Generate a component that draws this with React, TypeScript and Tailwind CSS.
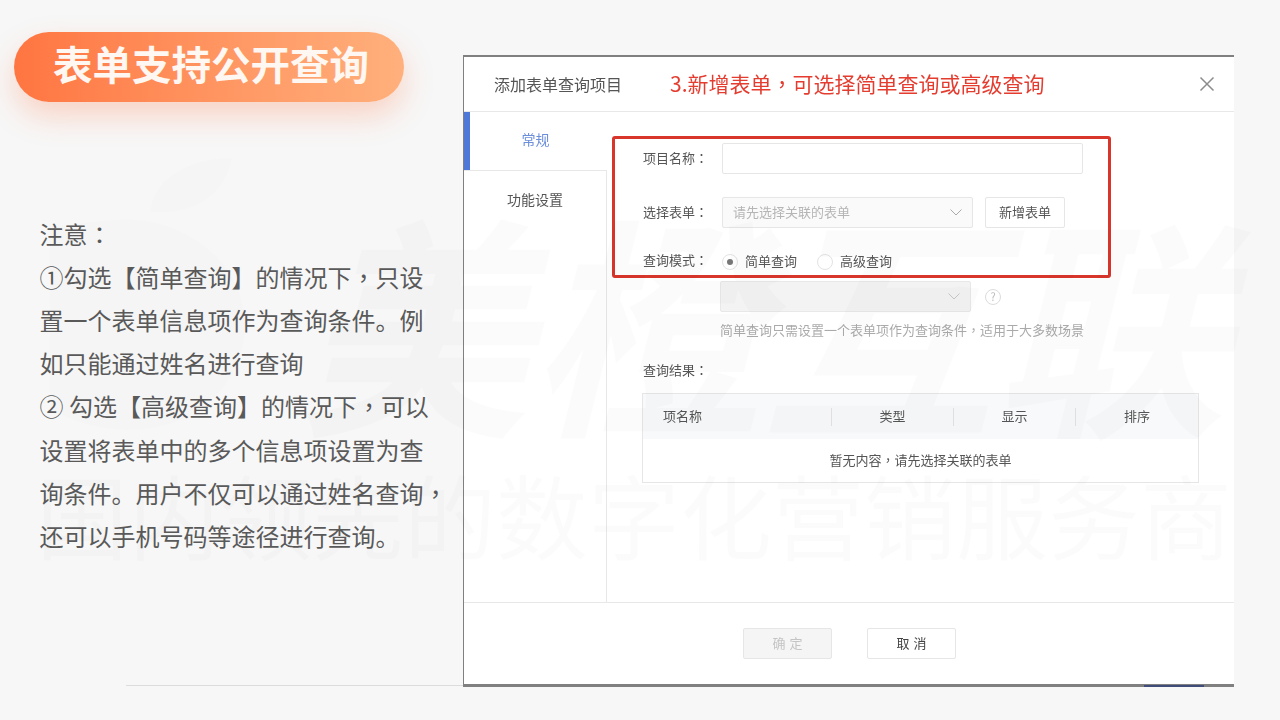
import React from "react";

const C = ({ children }: { children: React.ReactNode }) => (
  <span className="font-['Noto_Sans_CJK_TC','Noto_Sans_CJK_SC',sans-serif]">{children}</span>
);

const Label = ({ children }: { children: React.ReactNode }) => (
  <div className="w-[79px] pb-[2px] text-[13px] text-[#555] whitespace-nowrap">
    {children}
    <C>：</C>
  </div>
);

const Chevron = ({ color }: { color: string }) => (
  <svg width="12" height="7" viewBox="0 0 12 7" fill="none" stroke={color} strokeWidth="1">
    <path d="M0.5 0.5l5.5 5.5 5.5-5.5" />
  </svg>
);

const Radio = ({ on, label }: { on?: boolean; label: string }) => (
  <div className="flex items-center gap-[7px]">
    <div className="w-4 h-4 rounded-full border border-[#e3e3e3] bg-white flex items-center justify-center">
      {on && <div className="w-[6px] h-[6px] rounded-full bg-[#777]" />}
    </div>
    <span className="pb-[1px] text-[13px] text-[#555]">{label}</span>
  </div>
);

export default function App() {
  return (
    <div className="relative w-[1280px] h-[720px] overflow-hidden bg-[#f7f7f7] flex font-['Noto_Sans_CJK_SC',sans-serif]">
      <div className="w-[463px] h-full flex flex-col shrink-0">
        <div className="mt-8 ml-[14px] w-[390px] h-[70px] rounded-[35px] bg-gradient-to-r from-[#ff7541] to-[#ffb07c] shadow-[0_14px_30px_rgba(255,120,70,0.28)] flex items-center justify-center pb-[8px] pl-[4px]">
          <span className="text-[39.5px] leading-none font-bold text-[#fff8f2] whitespace-nowrap">表单支持公开查询</span>
        </div>
        <div className="mt-[109.5px] ml-[39.5px] text-2xl leading-[43.2px] text-[#5a5a5a] whitespace-nowrap">
          <div>注意<C>：</C></div>
          <div>①勾选【简单查询】的情况下<C>，</C>只设</div>
          <div>置一个表单信息项作为查询条件。例</div>
          <div>如只能通过姓名进行查询</div>
          <div>② 勾选【高级查询】的情况下<C>，</C>可以</div>
          <div>设置将表单中的多个信息项设置为查</div>
          <div>询条件。用户不仅可以通过姓名查询<C>，</C></div>
          <div>还可以手机号码等途径进行查询。</div>
        </div>
        <div className="mt-auto mb-[34px] ml-[126px] h-px bg-[#dcdcdc]" />
      </div>

      <div className="mt-[55px] w-[771px] h-[632px] shrink-0 bg-white border-t-[2px] border-b-[3px] border-l border-[#808080] flex flex-col blur-[0.3px]">
        <div className="h-[55px] shrink-0 border-b border-[#e8e8e8] flex items-center pl-[30px] pr-[19px]">
          <span className="text-base text-[#555] whitespace-nowrap">添加表单查询项目</span>
          <span className="ml-[48px] text-[21px] text-[#e43d30] whitespace-nowrap">3.新增表单<C>，</C>可选择简单查询或高级查询</span>
          <svg className="ml-auto" width="16" height="16" viewBox="0 0 16 16" fill="none" stroke="#8c8c8c" strokeWidth="1.5">
            <path d="M1.5 1.5l13 13M14.5 1.5l-13 13" />
          </svg>
        </div>

        <div className="flex-1 flex min-h-0">
          <div className="w-[143px] shrink-0 flex flex-col">
            <div className="h-[58px] border-l-[6px] border-[#4f79d9] flex items-center justify-center pr-[6px] pb-[4px] text-sm text-[#6c8edb]">常规</div>
            <div className="flex-1 border-t border-r border-[#e8e8e8] pt-[18px] text-center text-sm leading-5 text-[#555]">功能设置</div>
          </div>

          <div className="flex-1 pl-[36px] flex flex-col">
            <div className="mt-[31px] flex items-center h-[31px]">
              <Label>项目名称</Label>
              <div className="w-[361px] h-[31px] border border-[#e6e6e6] rounded-[2px] bg-white" />
            </div>
            <div className="mt-[23px] flex items-center h-[31px]">
              <Label>选择表单</Label>
              <div className="w-[251px] h-[31px] border border-[#e6e6e6] rounded-[2px] bg-[#fafafa] flex items-center justify-between pl-[10px] pr-[10px]">
                <span className="pb-[1px] text-[13px] text-[#b5b5b5]">请先选择关联的表单</span>
                <Chevron color="#aaa" />
              </div>
              <div className="ml-3 w-20 h-[31px] border border-[#e6e6e6] rounded-[2px] flex items-center justify-center pb-[1px] text-[13px] text-[#555]">新增表单</div>
            </div>
            <div className="mt-[18px] flex items-center h-[30px]">
              <Label>查询模式</Label>
              <div className="flex items-center gap-[20px] pt-[1px]">
                <Radio on label="简单查询" />
                <Radio label="高级查询" />
              </div>
            </div>
            <div className="mt-[5px] ml-[77px] flex items-center h-[31px]">
              <div className="w-[251px] h-[31px] border border-[#e8e8e8] rounded-[2px] bg-[#f3f3f3] flex items-center justify-end pr-[10px]">
                <Chevron color="#c8c8c8" />
              </div>
              <div className="ml-[14px] w-4 h-4 rounded-full border border-[#dcdcdc] flex items-center justify-center text-[11px] leading-none text-[#bbb]">?</div>
            </div>
            <div className="mt-[8px] ml-[77px] text-[13px] leading-5 text-[#aaa] whitespace-nowrap">简单查询只需设置一个表单项作为查询条件<C>，</C>适用于大多数场景</div>
            <div className="mt-[20px] text-[13px] leading-5 text-[#555]">查询结果<C>：</C></div>
            <div className="mt-[13px] ml-[-1px] w-[557px] h-[90px] border border-[#e6e6e6] flex flex-col">
              <div className="h-[45px] shrink-0 bg-[#f8f9fa] flex items-center text-[13px] text-[#555]">
                <div className="w-[189px] h-[18px] pl-[20px] border-r border-[#e3e3e3] leading-[16px]">项名称</div>
                <div className="w-[122px] h-[18px] border-r border-[#e3e3e3] leading-[16px] text-center">类型</div>
                <div className="w-[122px] h-[18px] border-r border-[#e3e3e3] leading-[16px] text-center">显示</div>
                <div className="flex-1 h-[18px] leading-[16px] text-center">排序</div>
              </div>
              <div className="flex-1 flex items-center justify-center pb-[2px] text-[13px] text-[#555]">暂无内容<C>，</C>请先选择关联的表单</div>
            </div>
          </div>
        </div>

        <div className="h-[82px] shrink-0 border-t border-[#e8e8e8] flex items-start justify-center gap-[35px] pt-[25px] pl-[1px]">
          <div className="w-[89px] h-[31px] border border-[#e6e6e6] rounded-[2px] bg-[#f5f5f5] flex items-center justify-center pl-[4px] pb-[1px] text-[13px] tracking-[4px] text-[#c4c4c4]">确定</div>
          <div className="w-[89px] h-[31px] border border-[#e6e6e6] rounded-[2px] bg-white flex items-center justify-center pl-[4px] pb-[1px] text-[13px] tracking-[4px] text-[#444]">取消</div>
        </div>
      </div>

      {/* page behind the dialog, peeking out at its lower edge */}
      <div className="absolute left-[1144px] top-[685px] w-[60px] h-[2px] bg-[#3f4d78]" />

      {/* red annotation frame */}
      <div className="absolute left-[612px] top-[136px] w-[499px] h-[142px] border-[3px] border-[#d8352b] rounded-[3px] pointer-events-none blur-[0.3px]" />

      {/* faint watermark */}
      <div className="absolute inset-0 pointer-events-none text-black/[0.016] font-bold whitespace-nowrap">
        <svg className="absolute left-[50px] top-[150px] opacity-60" width="210" height="300" viewBox="0 0 210 300" fill="currentColor">
          <path d="M100 62c2-30 34-54 82-54-6 34-34 58-82 54z" />
          <path d="M60 70c70-8 135 40 135 105 0 60-50 105-115 105-30 0-60-8-80-22V78c18-4 40-6 60-8z" />
        </svg>
        <div className="absolute left-[298px] top-[172px] text-[232px] leading-[290px] italic">美橙互联</div>
        <div className="absolute left-[36px] top-[458px] text-[92px] leading-[110px] font-normal">国内领先的数字化营销服务商</div>
      </div>
    </div>
  );
}
